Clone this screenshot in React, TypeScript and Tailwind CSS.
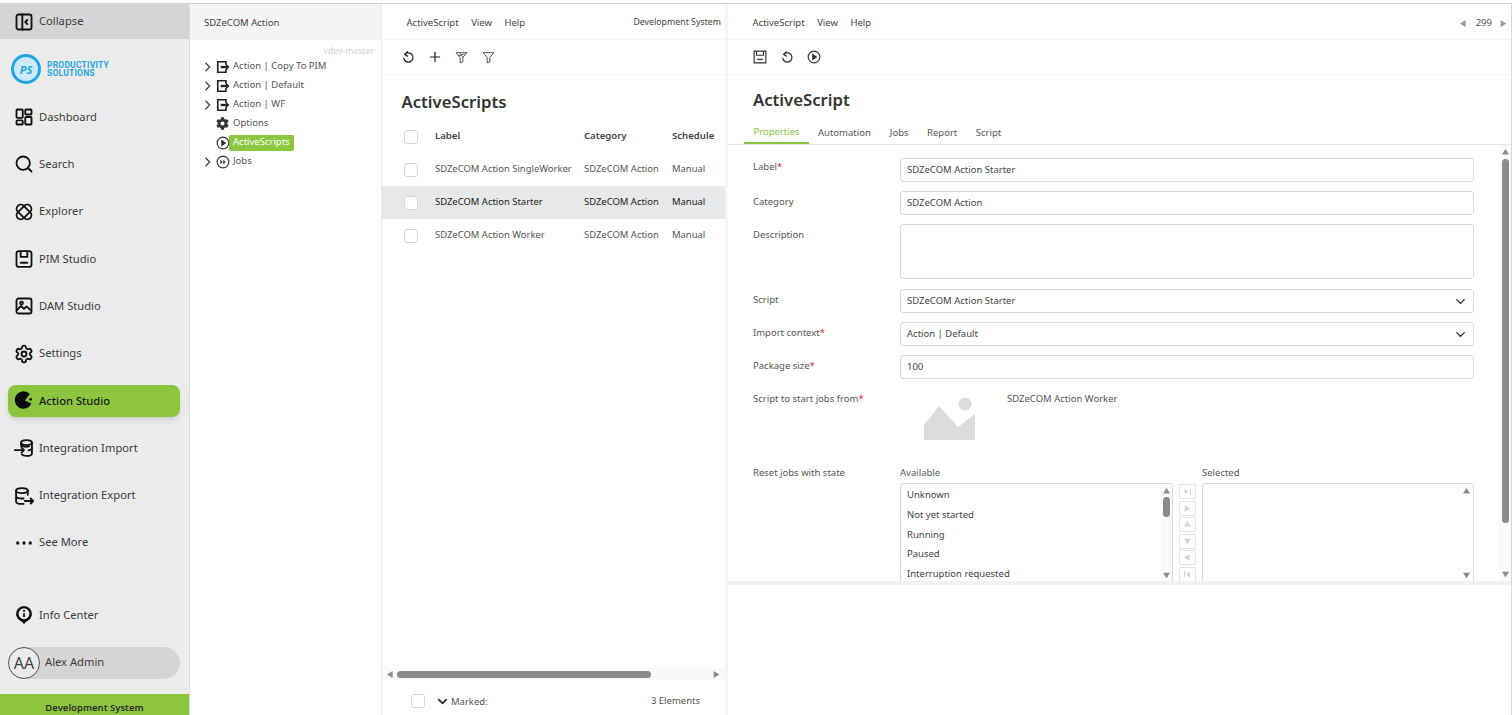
import React from "react";
import { Search, Settings, ChevronDown, Plus } from "lucide-react";
import { FaCog } from "react-icons/fa";

const I = ({ children, s = 20, cls = "" }: { children: React.ReactNode; s?: number; cls?: string }) => (
  <svg width={s} height={s} viewBox="0 0 24 24" fill="none" stroke="currentColor" strokeWidth={2.2} strokeLinecap="round" strokeLinejoin="round" className={"shrink-0 " + cls}>
    {children}
  </svg>
);

const CollapseIcon = () => (
  <I><rect x="3" y="3" width="18" height="18" rx="2.5" /><path d="M10 3v18" /><path d="M16 9.5 13.5 12l2.5 2.5" /></I>
);
const DashIcon = () => (
  <I><rect x="3" y="3" width="7.5" height="10" rx="1" /><rect x="13.5" y="3" width="7.5" height="6" rx="1" /><rect x="3" y="16" width="7.5" height="5" rx="1" /><rect x="13.5" y="12" width="7.5" height="9" rx="1" /></I>
);
const ExplorerIcon = () => (
  <I><rect x="1.500" y="7" width="21" height="10" rx="5" transform="rotate(-45 12 12)" /><rect x="1.500" y="7" width="21" height="10" rx="5" transform="rotate(45 12 12)" /></I>
);
const PimIcon = () => (
  <I><rect x="3" y="2.500" width="18" height="19" rx="3" /><path d="M8 3v6.500h8V3" /><path d="M8 16.500h8" /></I>
);
const DamIcon = () => (
  <I><rect x="3" y="3" width="18" height="18" rx="2.500" /><circle cx="9" cy="8.500" r="1.700" /><path d="m3.500 17 5-5 3.500 3.500 3-3 5.500 5" /></I>
);
const Pacman = () => (
  <svg width="20" height="20" viewBox="0 0 24 24" className="shrink-0"><path d="M19 3.500 13 11.500l8 3.500A10.500 10.500 0 1 1 19 3.500Z" fill="#0a0a0a" /><circle cx="20" cy="10" r="1.600" fill="#0a0a0a" /></svg>
);
const ImportIcon = () => (
  <I><ellipse cx="15" cy="5.500" rx="6.500" ry="3" /><path d="M8.500 5.500v4M21.500 5.500v13c0 1.700-3 3-6.500 3-2.500 0-4.700-.7-5.800-1.800" /><path d="M21.500 12c0 1.500-2 2.500-4 2.800M10 9.500c1.500.8 6 1.200 8 .6" /><path d="M1 14.500h11M9 11.500l3 3-3 3" /></I>
);
const ExportIcon = () => (
  <I><ellipse cx="9.500" cy="5.500" rx="7" ry="3" /><path d="M2.500 5.500v13c0 1.700 3 3 7 3h2M16.500 5.500v5M2.500 12c0 1.700 3 3 7 3h2" /><path d="M13 18h10M20 15l3 3-3 3" /></I>
);
const Dots = () => (
  <svg width="20" height="20" viewBox="0 0 24 24" className="shrink-0" fill="#111"><circle cx="4.500" cy="12" r="2" /><circle cx="12" cy="12" r="2" /><circle cx="19.500" cy="12" r="2" /></svg>
);
const InfoPin = () => (
  <svg width="20" height="20" viewBox="0 0 24 24" className="shrink-0" fill="none"><path d="M12 23c-1.500-2-2.500-3-4-3.700a9.500 9.500 0 1 1 8 0C14.500 20 13.500 21 12 23Z" fill="#111" /><circle cx="12" cy="10.500" r="6.500" fill="#ebebeb" /><path d="M12 10v4.500" stroke="#111" strokeWidth="2.200" /><circle cx="12" cy="7" r="1.300" fill="#111" /></svg>
);
const Undo = ({ s = 16 }: { s?: number }) => (
  <I s={s}><path d="M6.500 7.500a8 8 0 1 1-1.800 7" /><path d="M11 3 6.500 7.500l4.500 3" /></I>
);
const ExportBox = () => (
  <svg width="14" height="14" viewBox="0 0 24 24" fill="none" stroke="#222" strokeWidth="2.800" className="shrink-0"><path d="M17 8V3H3v18h14v-5" /><path d="M8 12h11" strokeWidth="4" /><path d="m17 6 6 6-6 6Z" fill="#222" strokeWidth="0" /></svg>
);
const FilterA = () => (
  <svg width="13" height="13" viewBox="0 0 24 24" fill="none" stroke="#333" strokeWidth="1.500" strokeLinejoin="round"><path d="M2 3h20l-7.500 9v8l-5 2V12Z" /><path d="m6 9 12-4M9 4l6 8" /></svg>
);
const FilterB = () => (
  <svg width="13" height="13" viewBox="0 0 24 24" fill="none" stroke="#333" strokeWidth="1.600" strokeLinejoin="round"><path d="M2 3h20l-7.500 9v8l-5 2V12Z" /></svg>
);
const TreeChevron = () => (
  <svg width="7" height="10" viewBox="0 0 7 10" fill="none" stroke="#444" strokeWidth="1.300"><path d="M1.500 .8 5.700 5 1.500 9.200" /></svg>
);
const Tri = ({ d, cls = "text-[#8a8a8a]", s = 7 }: { d: "u" | "d" | "l" | "r"; cls?: string; s?: number }) => {
  const p = { u: "M5 0 10 8H0Z", d: "M0 1h10L5 9Z", l: "M8 0v10L0 5Z", r: "M1 0v10l8-5Z" }[d];
  return <svg width={s} height={s} viewBox="0 0 10 10" className={"shrink-0 " + cls}><path d={p} fill="currentColor" /></svg>;
};

const nav: { label: string; icon: React.ReactNode }[] = [
  { label: "Dashboard", icon: <DashIcon /> },
  { label: "Search", icon: <Search size={20} strokeWidth={2.200} className="shrink-0" /> },
  { label: "Explorer", icon: <ExplorerIcon /> },
  { label: "PIM Studio", icon: <PimIcon /> },
  { label: "DAM Studio", icon: <DamIcon /> },
  { label: "Settings", icon: <Settings size={20} strokeWidth={2.200} className="shrink-0" /> },
];
const nav2 = [
  { label: "Integration Import", icon: <ImportIcon /> },
  { label: "Integration Export", icon: <ExportIcon /> },
  { label: "See More", icon: <Dots /> },
];

const NavRow = ({ label, icon }: { label: string; icon: React.ReactNode }) => (
  <div className="h-[47.300px] flex items-center gap-[5px] pl-[14px] text-[11.200px] text-[#3c3c3c] [&>svg]:text-[#111]">
    {icon}
    <span>{label}</span>
  </div>
);

const Sidebar = () => (
  <aside className="w-[190px] shrink-0 bg-[#ebebeb] border-r border-[#dcdcdc] flex flex-col">
    <div className="h-[35px] bg-[#d5d5d5] flex items-center gap-[5px] pl-[14px] text-[11.200px] text-[#3c3c3c]">
      <span className="text-[#111] flex"><CollapseIcon /></span>Collapse
    </div>
    <div className="h-[54.500px] pt-[6px] flex items-center pl-[11px] gap-[6px]">
      <div className="w-[30px] h-[30px] rounded-full border-[3px] border-[#1ea7e6] bg-[#cdeafa] flex items-center justify-center text-[11px] italic font-bold text-[#1ea7e6] leading-none">PS</div>
      <div className="text-[8.500px] font-bold leading-[8px] text-[#1ea7e6] tracking-[0.200px]" style={{ fontFamily: "Roboto, sans-serif" }}>PRODUCTIVITY<br />SOLUTIONS</div>
    </div>
    {nav.map((n) => <NavRow key={n.label} {...n} />)}
    <div className="h-[47.300px] flex items-center px-[8px]">
      <div className="w-[172px] h-[32px] rounded-[8px] bg-[#8cc63f] shadow-md flex items-center gap-[5px] pl-[6px] text-[11.200px] font-medium text-[#1a1a1a]">
        <Pacman />Action Studio
      </div>
    </div>
    {nav2.map((n) => <NavRow key={n.label} {...n} />)}
    <div className="flex-1" />
    <NavRow label="Info Center" icon={<InfoPin />} />
    <div className="h-[47px] flex items-center px-[8px]">
      <div className="w-[172px] h-[32px] rounded-full bg-[#d5d5d5] flex items-center gap-[5px] text-[11.200px] text-[#3c3c3c]">
        <div className="w-[32px] h-[32px] rounded-full border border-[#555] bg-[#ebebeb] flex items-center justify-center text-[16px] text-[#444]">AA</div>
        Alex Admin
      </div>
    </div>
    <div className="h-[8px]" />
    <div className="h-[21px] bg-[#8cc63f] flex items-end justify-center text-[9.500px] leading-[15px] font-semibold text-[#2c2c2c]">Development System</div>
  </aside>
);

const treeRows = [
  { label: "Action | Copy To PIM", arrow: true, icon: <ExportBox /> },
  { label: "Action | Default", arrow: true, icon: <ExportBox /> },
  { label: "Action | WF", arrow: true, icon: <ExportBox /> },
  { label: "Options", arrow: false, icon: <FaCog size={13} color="#333" className="shrink-0" /> },
];

const CircleIcon = ({ inner }: { inner: React.ReactNode }) => (
  <svg width="14" height="14" viewBox="0 0 24 24" fill="none" stroke="#333" strokeWidth="2" className="shrink-0"><circle cx="12" cy="12" r="10" />{inner}</svg>
);

const TreeRow = ({ arrow, icon, children }: { arrow: boolean; icon: React.ReactNode; children: React.ReactNode }) => (
  <div className="h-[19px] flex items-center text-[9.500px] text-[#555]">
    <span className="w-[11px] flex justify-center">{arrow && <TreeChevron />}</span>
    <span className="w-[15px] ml-[2px] flex justify-center">{icon}</span>
    <span className="ml-[3px]">{children}</span>
  </div>
);

const Tree = () => (
  <section className="w-[192px] shrink-0 border-r border-[#ececec] flex flex-col">
    <div className="h-[36px] bg-[#f5f5f5] flex items-center pl-[14px] pt-[3px] text-[9.500px] text-[#444]">SDZeCOM Action</div>
    <div className="text-right pr-[7px] text-[8.700px] leading-[12px] mt-[5px] text-[#d2d2d2]">vdev-master</div>
    <div className="pl-[12px]">
      {treeRows.map((r) => <TreeRow key={r.label} arrow={r.arrow} icon={r.icon}>{r.label}</TreeRow>)}
      <div className="h-[19px] flex items-center text-[9.500px]">
        <span className="w-[11px]" />
        <span className="w-[15px] ml-[2px] flex justify-center"><CircleIcon inner={<path d="M10 8v8l6-4Z" fill="#333" />} /></span>
        <span className="-ml-[1px] px-[4px] h-[16px] rounded-[2px] bg-[#8cc63f] text-white flex items-center">ActiveScripts</span>
      </div>
      <TreeRow arrow icon={<CircleIcon inner={<path d="m8 9 3 3-3 3zm5 0 3 3-3 3z" fill="#333" strokeWidth="1" />} />}>Jobs</TreeRow>
    </div>
  </section>
);

const Check = () => <span className="block w-[14px] h-[14px] rounded-[3px] border border-[#d6d6d6] bg-white shrink-0" />;

const MenuBar = ({ right, px = "pl-[24.500px]" }: { right: React.ReactNode; px?: string }) => (
  <div className={"h-[36px] pt-[3px] border-b border-[#f4f4f4] flex items-center justify-between text-[9.500px] text-[#444] " + px}>
    <div className="flex gap-[12.500px]"><span>ActiveScript</span><span>View</span><span>Help</span></div>
    {right}
  </div>
);

const listRows = [
  { l: "SDZeCOM Action SingleWorker", sel: false },
  { l: "SDZeCOM Action Starter", sel: true },
  { l: "SDZeCOM Action Worker", sel: false },
];

const ListPanel = () => (
  <section className="w-[343px] shrink-0 flex flex-col">
    <MenuBar right={<span className="pr-[4px] text-[8.800px]">Development System</span>} />
    <div className="h-[35px] border-b border-[#f4f4f4] flex items-center pl-[19px] text-[#222]">
      <Undo s={14} /><Plus size={16} strokeWidth={1.800} className="ml-[12px]" /><span className="ml-[11.500px] flex"><FilterA /></span><span className="ml-[14px] flex"><FilterB /></span>
    </div>
    <h1 className="text-[16.700px] font-semibold text-[#333] pl-[19.500px] mt-[15px] leading-[24px]">ActiveScripts</h1>
    <div className="h-[33px] mt-[6px] flex items-center text-[9.600px] font-semibold text-[#444]">
      <span className="w-[53px] pl-[22px]"><Check /></span>
      <span className="w-[149px]">Label</span><span className="w-[88px]">Category</span><span>Schedule</span>
    </div>
    {listRows.map((r) => (
      <div key={r.l} className={"h-[33px] flex items-center text-[9.450px] " + (r.sel ? "bg-[#e7e8ea] text-[#222]" : "text-[#555]")}>
        <span className="w-[53px] pl-[22px]"><Check /></span>
        <span className="w-[149px]">{r.l}</span><span className="w-[88px]">SDZeCOM Action</span><span>Manual</span>
      </div>
    ))}
    <div className="flex-1" />
    <div className="h-[12px] bg-[#fafafa] flex items-center px-[5px] gap-[3px]">
      <Tri d="l" />
      <div className="w-[254px] h-[7px] rounded-full bg-[#8a8a8a]" />
      <div className="flex-1" />
      <Tri d="r" />
    </div>
    <div className="h-[35px] pt-[7px] flex items-center pl-[29px] pr-[25px] text-[9.500px] text-[#555]">
      <Check />
      <ChevronDown size={15} strokeWidth={2.500} color="#222" className="ml-[10px]" />
      <span className="ml-[1px] mt-[3px]">Marked:</span>
      <span className="ml-auto">3 Elements</span>
    </div>
  </section>
);

const Req = () => <span className="text-[#e0202a]">*</span>;
const Lbl = ({ children, cls = "pt-[3.500px]" }: { children: React.ReactNode; cls?: string }) => <span className={"w-[147px] shrink-0 text-[9.500px] text-[#555] " + cls}>{children}</span>;
const Field = ({ children, arrow = false, cls = "h-[24px]" }: { children?: React.ReactNode; arrow?: boolean; cls?: string }) => (
  <div className={"flex-1 rounded-[3px] border border-[#d9d9d9] bg-white flex items-center justify-between pl-[6px] pr-[5px] text-[9.500px] text-[#444] " + cls}>
    <span>{children}</span>
    {arrow && <ChevronDown size={15} strokeWidth={2.200} color="#333" />}
  </div>
);

const states = ["Unknown", "Not yet started", "Running", "Paused", "Interruption requested"];
const moveBtns: React.ReactNode[] = [
  <span className="flex items-center gap-[1px]"><Tri d="r" cls="text-[#d4d4d4]" s={5} /><span className="w-[1px] h-[6px] bg-[#d4d4d4]" /></span>,
  <Tri d="r" cls="text-[#d4d4d4]" />,
  <Tri d="u" cls="text-[#d4d4d4]" />,
  <Tri d="d" cls="text-[#d4d4d4]" />,
  <Tri d="l" cls="text-[#d4d4d4]" />,
  <span className="flex items-center gap-[1px]"><span className="w-[1px] h-[6px] bg-[#d4d4d4]" /><Tri d="l" cls="text-[#d4d4d4]" s={5} /></span>,
];

const Detail = () => (
  <section className="flex-1 border-l-[3px] border-l-[#f6f6f6] border-r border-r-[#d8d8d8] flex flex-col min-w-0">
    <MenuBar
      right={
        <div className="flex items-center pr-[4px] text-[#555]">
          <Tri d="l" cls="text-[#999]" /><span className="ml-[9px] mr-[8px]">299</span><Tri d="r" cls="text-[#999]" />
        </div>
      }
    />
    <div className="h-[35px] border-b border-[#f4f4f4] flex items-center gap-[13px] pl-[25px] text-[#333]">
      <svg width="14" height="14" viewBox="0 0 24 24" fill="none" stroke="#333" strokeWidth="2"><path d="M2 2h20v20H2Z" /><path d="M6 2v7h12V2M7 16h10" /></svg>
      <Undo s={14} />
      <span className="flex"><CircleIcon inner={<path d="M10 8v8l6-4Z" fill="#333" />} /></span>
    </div>
    <h2 className="text-[16.700px] font-semibold text-[#333] pl-[25px] mt-[13px] leading-[24px]">ActiveScript</h2>
    <div className="h-[34px] mt-[-1px] border-b border-[#e6e6e6] flex items-end pl-[16px] text-[9.500px] text-[#555]">
      <span className="h-[34px] w-[65px] flex items-center justify-center pt-[12px] text-[#8cc63f] border-b-2 border-[#8cc63f]">Properties</span>
      <span className="h-[34px] flex items-center ml-[9px] pt-[12px]">Automation</span>
      <span className="h-[34px] flex items-center ml-[19px] pt-[12px]">Jobs</span>
      <span className="h-[34px] flex items-center ml-[18.500px] pt-[12px]">Report</span>
      <span className="h-[34px] flex items-center ml-[18.500px] pt-[12px]">Script</span>
    </div>
    <div className="h-[436px] flex overflow-hidden">
      <div className="flex-1 pl-[25px] pr-[25px] pt-[13px] min-w-0 flex flex-col">
        <div className="flex h-[24px]"><Lbl cls="pt-[2px]">Label<Req /></Lbl><Field>SDZeCOM Action Starter</Field></div>
        <div className="flex mt-[9px]"><Lbl>Category</Lbl><Field>SDZeCOM Action</Field></div>
        <div className="flex mt-[9px]"><Lbl>Description</Lbl><Field cls="h-[55px]" /></div>
        <div className="flex mt-[10px]"><Lbl>Script</Lbl><Field arrow>SDZeCOM Action Starter</Field></div>
        <div className="flex mt-[9px]"><Lbl>Import context<Req /></Lbl><Field arrow>Action | Default</Field></div>
        <div className="flex mt-[9px]"><Lbl>Package size<Req /></Lbl><Field>100</Field></div>
        <div className="flex mt-[13px] h-[54px]">
          <Lbl cls="">Script to start jobs from<Req /></Lbl>
          <svg width="52" height="44" viewBox="0 0 52 44" className="ml-[24px] mt-[6px] shrink-0"><circle cx="41" cy="6" r="6.500" fill="#dcdcdc" /><path d="M0 42V27L15 8l19 21 17-13v26Z" fill="#dcdcdc" /></svg>
          <span className="ml-[31px] text-[9.500px] text-[#555]">SDZeCOM Action Worker</span>
        </div>
        <div className="flex mt-[24px] text-[9.500px] text-[#555]">
          <Lbl cls="">Reset jobs with state</Lbl>
          <div className="flex-1 flex">
            <div className="w-[273px] shrink-0">
              <div className="h-[17px]">Available</div>
              <div className="h-[120px] rounded-[3px] border border-[#d9d9d9] flex">
                <div className="flex-1 pl-[6px] pt-[1.500px]">
                  {states.map((s) => <div key={s} className="h-[19.700px] flex items-center text-[#444]">{s}</div>)}
                </div>
                <div className="w-[11px] bg-[#fafafa] flex flex-col items-center pt-[4px]">
                  <Tri d="u" /><div className="w-[7px] h-[20px] rounded-full bg-[#8a8a8a] mt-[2px]" />
                  <div className="flex-1" />
                  <div className="h-[30px]"><Tri d="d" /></div>
                </div>
              </div>
            </div>
            <div className="w-[29px] shrink-0 pt-[17px] pl-[6px]">
              <div className="flex flex-col gap-[1.500px] pt-[1px]">
                {moveBtns.map((b, i) => (
                  <div key={i} className="w-[17px] h-[15px] border border-[#e4e4e4] rounded-[1px] flex items-center justify-center">{b}</div>
                ))}
              </div>
            </div>
            <div className="flex-1 min-w-0">
              <div className="h-[17px]">Selected</div>
              <div className="h-[120px] rounded-[3px] border border-[#d9d9d9] flex justify-end">
                <div className="w-[11px] mr-[1px] flex flex-col items-center pt-[4px]">
                  <Tri d="u" /><div className="flex-1" /><div className="h-[30px]"><Tri d="d" /></div>
                </div>
              </div>
            </div>
          </div>
        </div>
      </div>
      <div className="w-[12px] bg-[#fafafa] flex flex-col items-center pt-[4px] pb-[3px] shrink-0">
        <Tri d="u" />
        <div className="w-[7px] h-[364px] rounded-full bg-[#8a8a8a] mt-[3px]" />
        <div className="flex-1" />
        <Tri d="d" />
      </div>
    </div>
    <div className="h-[4px] bg-[#f2f2f2]" />
    <div className="flex-1" />
  </section>
);

export default function App() {
  return (
    <div className="w-[1512px] h-[715px] overflow-hidden bg-white pt-[3px]" style={{ fontFamily: "'Noto Sans', sans-serif" }}>
      <div className="h-[712px] border-t border-[#cfcfcf] flex">
        <Sidebar />
        <Tree />
        <ListPanel />
        <Detail />
      </div>
    </div>
  );
}
